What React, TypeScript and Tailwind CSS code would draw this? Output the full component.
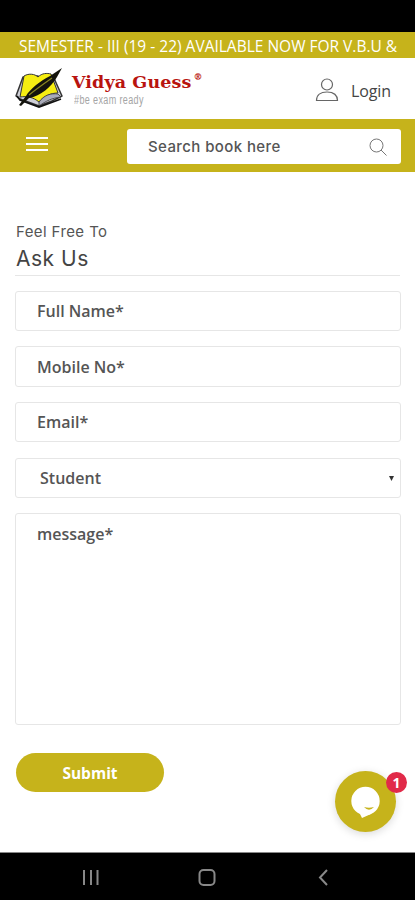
const fields = [
  { label: "Full Name*", box: "h-10 mb-[15px]" },
  { label: "Mobile No*", box: "h-[41px] mb-[15px]" },
  { label: "Email*", box: "h-10 mb-4" },
]

function Logo() {
  return (
    <div className="flex items-start">
      <svg width="48" height="42" viewBox="0 0 48 42" className="mt-[10px]">
        <path d="M8 9 L23 8 L27 11 L38 8 L47 28 L37 33 L24 38 L5 31 L1 28 Z" fill="#cfd0d8" stroke="#333" strokeWidth="1.5" strokeLinejoin="round" />
        <path d="M9 8 C14 5 20 6 23 9 C27 5 32 5 36 6 L43 25 C36 25 29 28 24 34 C18 29 12 28 5 29 Z" fill="#f6ee12" stroke="#333" strokeWidth="1" />
        <path d="M24 34 C29 27 36 25 43 26 L46 29 C37 30 31 33 24 38 Z" fill="#a9abba" stroke="#333" strokeWidth="0.8" />
        <path d="M2 28 L5 32 L24 39 L46 31" stroke="#111" strokeWidth="1.8" fill="none" />
        <path d="M11 28 C15 21 25 13 35 8 L47 0 L42 9 C36 19 26 28 14 30 L6 38 L4 37 Z" fill="#14140c" />
        <path d="M14 27 C20 22 27 17 37 10" stroke="#8a8722" strokeWidth="1.2" fill="none" />
      </svg>
      <div className="ml-[9px] mt-[13px]">
        <div className="flex items-start whitespace-nowrap font-['DejaVu_Serif',serif] font-bold text-[17.5px] leading-[22px] text-[#b9140f]">
          <span className="tracking-[0.1px]">Vidya Guess</span>
          <span className="ml-0.5 text-[9px] leading-[12px]">®</span>
        </div>
        <p className="ml-0.5 origin-left scale-x-75 whitespace-nowrap font-['Liberation_Sans',sans-serif] text-[12px] leading-[14px] tracking-[0.5px] text-[#a5a5a5]">#be exam ready</p>
      </div>
    </div>
  )
}

export default function App() {
  return (
    <div className="relative flex h-[900px] w-[415px] flex-col overflow-hidden bg-white font-['Open_Sans',sans-serif] text-[#555]">
      <div className="h-8 shrink-0 bg-black" />
      <div className="h-[26px] shrink-0 overflow-hidden whitespace-nowrap bg-[#c6b31b] pl-[19px] text-[15.5px] leading-[29px] text-white">
        SEMESTER - III (19 - 22) AVAILABLE NOW FOR V.B.U &amp;
      </div>

      <header className="flex h-[61px] shrink-0 justify-between pl-[15px] pr-6">
        <Logo />
        <div className="flex items-center pt-1 text-[#444]">
          <svg width="24" height="25" viewBox="0 0 24 25" fill="none" stroke="#666" strokeWidth="1.2">
            <circle cx="12" cy="6.500" r="5.5" />
            <path d="M1.5 22.500 C1.5 17 5.5 14 12 14 C18.500 14 22.5 17 22.5 22.500 Z" />
          </svg>
          <span className="ml-3 text-[16px] font-medium tracking-[-0.1px]">Login</span>
        </div>
      </header>

      <nav className="flex h-[53px] shrink-0 items-start justify-between bg-[#c6b31b] pl-[26px] pr-3.5 pt-2.5">
        <div className="mt-2 flex w-[22px] flex-col gap-1">
          <div className="h-0.5 bg-white" />
          <div className="h-0.5 bg-white" />
          <div className="h-0.5 bg-white" />
        </div>
        <div className="flex h-[35px] w-[274px] items-center justify-between rounded-[3px] bg-white pl-[21px] pr-3.5">
          <span className="pt-0.5 font-['Inter',sans-serif] text-[15px] font-medium tracking-[0.4px]">Search book here</span>
          <svg width="18" height="18" viewBox="0 0 18 18" fill="none" stroke="#777" strokeWidth="1">
            <circle cx="7.500" cy="7.500" r="6.500" />
            <path d="M12 12 L17.500 17.500" />
          </svg>
        </div>
      </nav>

      <main className="flex-1 px-[15px] pt-[49px]">
        <div className="mb-[15px] border-b border-[#e6e6e6] pl-px font-['Inter',sans-serif]">
          <p className="text-[15px] leading-[22px] tracking-[0.4px]">Feel Free To</p>
          <h1 className="h-[32px] text-[21px] leading-[31px] tracking-[0.5px] text-[#444]">Ask Us</h1>
        </div>
        {fields.map((field) => (
          <div key={field.label} className={`${field.box} flex w-[386px] items-center rounded-[3px] border border-[#e6e6e6] pl-[21px] text-[16px] font-semibold`}>
            {field.label}
          </div>
        ))}
        <div className="mb-[15px] flex h-10 w-[386px] items-center justify-between rounded-[3px] border border-[#e6e6e6] pl-6 pr-1.5 text-[16px] font-semibold">
          Student
          <svg width="5" height="5" viewBox="0 0 5 5">
            <path d="M0 0 H5 L2.500 5 Z" fill="#333" />
          </svg>
        </div>
        <div className="h-[212px] w-[386px] rounded-[3px] border border-[#e6e6e6] pl-[21px] pt-2 text-[16px] font-semibold">message*</div>
        <button className="ml-px mt-7 block h-[39px] w-[148px] rounded-full bg-[#c6b31b] pt-0.5 text-[15.5px] font-bold text-white">Submit</button>
      </main>

      <div className="absolute left-[335px] top-[771px] size-[61px] rounded-full bg-[#c6b31b] shadow-[0_2px_8px_rgba(0,0,0,0.15)]">
        <svg width="61" height="61" viewBox="0 0 61 61">
          <circle cx="30.500" cy="30" r="14.200" fill="#fff" />
          <path d="M24 41 L27 47 L37 42.500 Z" fill="#fff" />
          <path d="M29 36 Q34 37.500 39 36 Q34 41.500 29 36 Z" fill="#c6b31b" />
        </svg>
        <div className="absolute left-[51px] top-px flex size-[21px] items-center justify-center rounded-full bg-[#e12a49] text-[14px] font-bold text-white">1</div>
      </div>

      <footer className="h-12 shrink-0 border-t border-[#888] bg-black">
        <svg width="415" height="47" viewBox="0 0 415 47" fill="none" stroke="#888" strokeWidth="2">
          <path d="M84 17 V32 M91 17 V32 M97.500 17 V32" />
          <rect x="199.500" y="17" width="15" height="15" rx="4" />
          <path d="M327 17 L320 24.500 L327 32" />
        </svg>
      </footer>
    </div>
  )
}
